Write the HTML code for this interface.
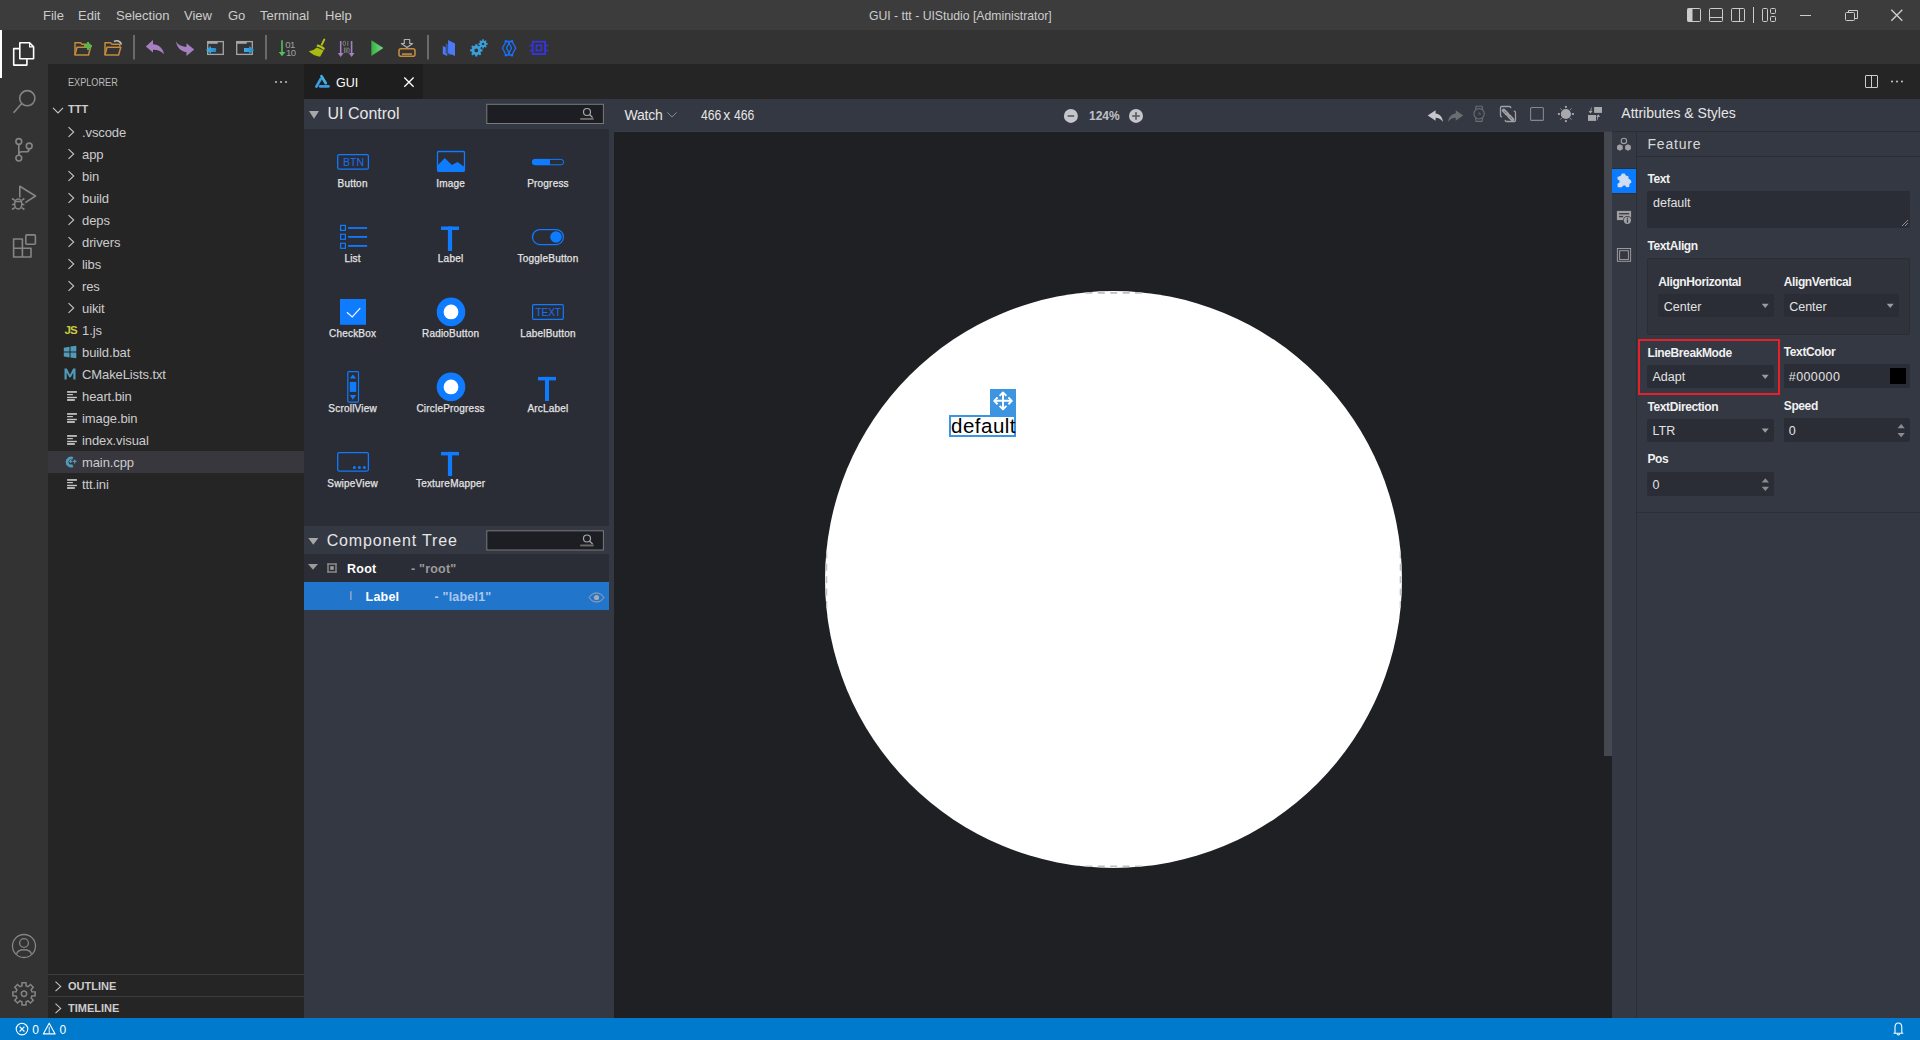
<!DOCTYPE html>
<html><head><meta charset="utf-8">
<style>
*{margin:0;padding:0;box-sizing:border-box}
html,body{width:1920px;height:1040px;overflow:hidden;background:#1e1e1e;font-family:"Liberation Sans",sans-serif;}
.a{position:absolute}
.t{position:absolute;white-space:nowrap;line-height:1}
svg{position:absolute;overflow:visible}
</style></head><body>
<!-- TITLE BAR -->
<div class="a" style="left:0;top:0;width:1920px;height:30px;background:#3c3c3c"></div>
<div id="menus" style="color:#cccccc;font-size:13px">
<span class="t" style="left:43px;top:9px">File</span>
<span class="t" style="left:78px;top:9px">Edit</span>
<span class="t" style="left:116px;top:9px">Selection</span>
<span class="t" style="left:184px;top:9px">View</span>
<span class="t" style="left:228px;top:9px">Go</span>
<span class="t" style="left:260px;top:9px">Terminal</span>
<span class="t" style="left:325px;top:9px">Help</span>
</div>
<span class="t" style="left:869px;top:9px;color:#cccccc;font-size:13px;transform:scaleX(0.94);transform-origin:0 0">GUI - ttt - UIStudio [Administrator]</span>

<!-- ACTIVITY BAR -->
<div class="a" style="left:0;top:30px;width:48px;height:988px;background:#333333"></div>
<!-- TOOLBAR -->
<div class="a" style="left:48px;top:30px;width:1872px;height:34px;background:#333333"></div>


<!-- title right icons -->
<svg style="left:0;top:0" width="1920" height="30">
 <g fill="none" stroke="#cccccc" stroke-width="1">
  <rect x="1687.5" y="8.5" width="13" height="13" rx="1"/>
  <rect x="1709.5" y="8.5" width="13" height="13" rx="1"/>
  <line x1="1709.5" y1="17.5" x2="1722.5" y2="17.5"/>
  <rect x="1731.5" y="8.5" width="13" height="13" rx="1"/>
  <line x1="1739.5" y1="8.5" x2="1739.5" y2="21.5"/>
  <line x1="1753.5" y1="7" x2="1753.5" y2="23"/>
  <rect x="1762.5" y="8.5" width="5" height="13" rx="1"/>
  <rect x="1770.5" y="8.5" width="5" height="5" rx="1"/>
  <rect x="1770.5" y="16.5" width="5" height="5" rx="1"/>
  <line x1="1800" y1="15.5" x2="1811" y2="15.5"/>
  <rect x="1845.5" y="12.5" width="9" height="8" rx="1"/>
  <path d="M1848.5 12.5 V10.5 H1857.5 V18.5 H1854.5"/>
  <path d="M1891.3 9.8 L1902.3 20.8 M1902.3 9.8 L1891.3 20.8" stroke-width="1.4"/>
 </g>
 <rect x="1687.5" y="8.5" width="5" height="13" fill="#cccccc"/>
</svg>

<!-- activity bar icons -->
<div class="a" style="left:0;top:30px;width:2px;height:48px;background:#ffffff"></div>
<svg style="left:0;top:30px" width="48" height="988">
 <g fill="none" stroke="#ffffff" stroke-width="1.6" stroke-linejoin="round">
  <path d="M19.8 18.6 H13.7 V35.1 H26.9 V28.8"/>
  <path d="M19.8 12.7 H29.6 L33.6 16.9 V28.8 H19.8 Z"/>
  <path d="M29.6 12.7 V16.9 H33.6" stroke-width="1.2"/>
 </g>
 <g fill="none" stroke="#858585" stroke-width="1.6" stroke-linejoin="round">
  <circle cx="27.3" cy="68.2" r="7.6"/>
  <line x1="21.5" y1="73.8" x2="13.6" y2="82.8"/>
  <circle cx="18.8" cy="111.5" r="2.9"/>
  <circle cx="18.8" cy="128.1" r="2.9"/>
  <circle cx="29.2" cy="116" r="2.9"/>
  <path d="M18.8 114.4 V125.2 M29.2 118.9 Q29 121.8 26.5 121.8 H21.8 Q18.8 121.8 18.8 125"/>
  <path d="M19.8 167.5 V156.3 L35.5 166 L25.3 172.6"/>
  <ellipse cx="18.2" cy="174" rx="3.6" ry="5"/>
  <path d="M14.6 171.5 H21.8 M12 168.5 L14.8 170.3 M24.4 168.5 L21.6 170.3 M12 174.5 H14.6 M21.8 174.5 H24.4 M12 179.5 L14.8 177.7 M24.4 179.5 L21.6 177.7"/>
  <path d="M13.6 209 H22.4 V218.2 H31 V227 H13.6 Z M13.6 218.2 H22.4 V227" />
  <rect x="25.8" y="204.9" width="9.6" height="9.3" rx="1"/>
  <g stroke-width="1.3"><circle cx="24" cy="916" r="11.5"/>
  <circle cx="24" cy="913" r="4.4"/>
  <path d="M16.4 924.3 C18 918.2 30 918.2 31.6 924.3"/></g>
 </g>
 <g transform="translate(24,963.8)" fill="none" stroke="#858585" stroke-width="1.5" stroke-linejoin="miter">
  <circle r="2.7"/>
  <path d="M7.92 -2.12 L11.13 -1.96 L11.13 1.96 L7.92 2.12 L7.10 4.10 L9.26 6.48 L6.48 9.26 L4.10 7.10 L2.12 7.92 L1.96 11.13 L-1.96 11.13 L-2.12 7.92 L-4.10 7.10 L-6.48 9.26 L-9.26 6.48 L-7.10 4.10 L-7.92 2.12 L-11.13 1.96 L-11.13 -1.96 L-7.92 -2.12 L-7.10 -4.10 L-9.26 -6.48 L-6.48 -9.26 L-4.10 -7.10 L-2.12 -7.92 L-1.96 -11.13 L1.96 -11.13 L2.12 -7.92 L4.10 -7.10 L6.48 -9.26 L9.26 -6.48 L7.10 -4.10 Z"/>
 </g>
</svg>


<!-- toolbar icons -->
<svg style="left:0;top:30px" width="600" height="34">
 <defs>
  <linearGradient id="gplay" x1="0" x2="1"><stop offset="0" stop-color="#36b246"/><stop offset="1" stop-color="#74d883"/></linearGradient>
  <linearGradient id="garr" x1="0" x2="1"><stop offset="0" stop-color="#41aee8"/><stop offset="1" stop-color="#2389c9"/></linearGradient>
 </defs>
 <!-- folder new -->
 <g fill="none" stroke="#c48a3e" stroke-width="1.5" stroke-linejoin="round">
  <path d="M75 25 V12.8 H80.5 L82 14.3 H89.8 V16.5"/>
  <path d="M75 25 L77 17.3 H90.5 L88.5 25 Z"/>
  <path d="M105 25 V12.8 H110.5 L112 14.3 H119.8 V16.5"/>
  <path d="M105 25 L107 17.3 H120.8 L118.6 25 Z"/>
 </g>
 <path d="M88 12 V20 M84 16 H92" stroke="#3ec24e" stroke-width="2"/>
 <path d="M114 11.5 C117 10 120.5 11 121.5 14.5" fill="none" stroke="#bdbdbd" stroke-width="1.6"/>
 <!-- separators -->
 <rect x="133" y="5" width="2" height="24.5" fill="#6a6a6a"/>
 <rect x="265" y="5" width="2" height="24.5" fill="#6a6a6a"/>
 <rect x="427" y="5" width="2" height="24.5" fill="#6a6a6a"/>
 <!-- undo/redo -->
 <path d="M145.8 16.5 L153 10 V14.2 C158.5 14.2 163 18 164.1 24.3 C161 21 157 19.6 153 19.8 V22.6 Z" fill="#a780c2"/>
 <path d="M194.2 19.4 L186.5 13.3 V16.8 C181.5 16.5 177.5 14.5 176 11.2 C176.5 17 181 21.5 186.5 22.2 V25.9 Z" fill="#a780c2"/>
 <!-- window arrows -->
 <g fill="none" stroke="#a5a5a5" stroke-width="1.3">
  <rect x="207.7" y="11.6" width="15.6" height="12.8"/>
  <rect x="236.7" y="11.6" width="15.6" height="12.8"/>
 </g>
 <rect x="207.7" y="11.6" width="10" height="2.2" fill="#a5a5a5"/>
 <rect x="236.7" y="11.6" width="10" height="2.2" fill="#a5a5a5"/>
 <path d="M206 20 L211 16 V17.9 H216.1 V22.1 H211 V24 Z" fill="url(#garr)"/>
 <path d="M254.2 20 L249.2 16 V17.9 H244 V22.1 H249.2 V24 Z" fill="url(#garr)"/>
 <!-- binary sort -->
 <path d="M282 10.2 V24" stroke="#50c25c" stroke-width="1.6"/>
 <path d="M278.7 22 L285.4 22 L282 26.2 Z" fill="#50c25c"/>
 <text x="285.2" y="17.9" font-family="Liberation Sans" font-size="9.5" fill="#a0a0a0" letter-spacing="-0.5">01</text>
 <text x="286" y="26.1" font-family="Liberation Sans" font-size="9.5" fill="#a0a0a0" letter-spacing="-0.5">10</text>
 <!-- broom -->
 <path d="M324.3 9.5 L321.8 14.6" stroke="#b4c414" stroke-width="1.9" stroke-linecap="round"/>
 <path d="M317.8 15.6 Q321.3 16.2 323.6 18.6" stroke="#b4c414" stroke-width="2.3" stroke-linecap="round" fill="none"/>
 <path d="M316.9 17.6 L323.6 20.4 L320.1 26.8 Q313.5 25.8 308.8 21.3 Q313.5 21 316.9 17.6 Z" fill="#aabb10"/>
 <!-- purple arrows -->
 <g stroke="#a77fc5" stroke-width="1.6">
  <path d="M340.7 11 V24"/><path d="M351.6 11 V24"/>
 </g>
 <path d="M337.8 23 H343.6 L340.7 27 Z M348.8 23 H354.5 L351.6 27 Z" fill="#a77fc5"/>
 <g fill="none" stroke="#8a8a8a" stroke-width="0.8">
  <rect x="343.2" y="11.2" width="2.2" height="4.4" rx="1"/>
  <path d="M347.8 11 V16 M344.4 17.5 V23 M346 17.5 V23"/>
  <rect x="347" y="18" width="2.2" height="4.4" rx="1"/>
 </g>
 <!-- play -->
 <path d="M371.4 10.3 L383.4 18 L371.4 25.9 Z" fill="url(#gplay)"/>
 <!-- deploy -->
 <rect x="399" y="18.8" width="16" height="7.4" rx="2" fill="none" stroke="#c48a3e" stroke-width="1.6"/>
 <rect x="402" y="23.3" width="10" height="1.6" fill="#c48a3e"/>
 <path d="M404.3 9.5 H409.7 V13.5 H412.6 L407 17.5 L401.4 13.5 H404.3 Z" fill="none" stroke="#b0b0b0" stroke-width="1.2" stroke-linejoin="round"/>
 <!-- building -->
 <path d="M442.8 16 L447.2 18 V26 L442.8 24 Z" fill="#4a7af5"/>
 <path d="M445.6 13.4 L451 15.6 V25.6 L445.6 23.4 Z" fill="#3b4f90"/>
 <path d="M448.1 10 L455 13.5 V26 L448.1 23 Z" fill="#4a7af5"/>
 <!-- gears -->
 <g fill="#3a9ed8">
  <circle cx="476.3" cy="20.4" r="4.8"/>
  <circle cx="483" cy="13.9" r="3.3"/>
 </g>
 <g stroke="#3a9ed8" stroke-width="2.2">
  <path d="M476.3 14.2 V26.6 M470.1 20.4 H482.5 M471.9 16 L480.7 24.8 M480.7 16 L471.9 24.8"/>
 </g>
 <g stroke="#3a9ed8" stroke-width="1.6">
  <path d="M483 9.3 V18.5 M478.4 13.9 H487.6 M479.8 10.7 L486.2 17.1 M486.2 10.7 L479.8 17.1"/>
 </g>
 <circle cx="476.3" cy="20.4" r="1.9" fill="#333333"/>
 <circle cx="483" cy="13.9" r="1.2" fill="#333333"/>
 <!-- diamond -->
 <g fill="none" stroke="#1a6ff5" stroke-width="1.4">
  <path d="M506 11.5 L502.5 18 L506 25 M512 11.5 L515.7 18 L512 25"/>
  <path d="M509 13 L506.5 18 L509 23 L511.5 18 Z"/>
  <path d="M506 11.5 H512 M506 25 H512"/>
 </g>
 <g fill="#1a6ff5"><circle cx="506" cy="11.3" r="1.3"/><circle cx="512" cy="11.3" r="1.3"/><circle cx="506" cy="25.2" r="1.3"/><circle cx="512" cy="25.2" r="1.3"/><circle cx="509" cy="12.5" r="1.2"/><circle cx="509" cy="23.5" r="1.2"/></g>
 <!-- chip -->
 <rect x="532.7" y="11.7" width="12.4" height="12.4" fill="none" stroke="#3535e0" stroke-width="1.8"/>
 <rect x="536.3" y="15.3" width="5.2" height="5.2" fill="none" stroke="#3535e0" stroke-width="1.6"/>
 <path d="M529.5 15.5 H532 M529.5 20.5 H532 M545.8 15.5 H548.3 M545.8 20.5 H548.3" stroke="#3535e0" stroke-width="1.6"/>
</svg>

<!-- SIDEBAR -->
<div class="a" style="left:48px;top:64px;width:256px;height:954px;background:#252526"></div>

<div class="a" style="left:48px;top:451px;width:256px;height:22px;background:#37373d"></div>
<span class="t" style="left:68px;top:76.99px;font-size:11px;color:#bbbbbb;transform:scaleX(0.83);transform-origin:0 0">EXPLORER</span>
<span class="t" style="left:68px;top:104.49px;font-size:11px;font-weight:bold;color:#cccccc">TTT</span>
<span class="t" style="left:82px;top:125.70px;font-size:13px;letter-spacing:-0.1px;color:#cccccc">.vscode</span>
<span class="t" style="left:82px;top:147.70px;font-size:13px;letter-spacing:-0.1px;color:#cccccc">app</span>
<span class="t" style="left:82px;top:169.70px;font-size:13px;letter-spacing:-0.1px;color:#cccccc">bin</span>
<span class="t" style="left:82px;top:191.70px;font-size:13px;letter-spacing:-0.1px;color:#cccccc">build</span>
<span class="t" style="left:82px;top:213.70px;font-size:13px;letter-spacing:-0.1px;color:#cccccc">deps</span>
<span class="t" style="left:82px;top:235.70px;font-size:13px;letter-spacing:-0.1px;color:#cccccc">drivers</span>
<span class="t" style="left:82px;top:257.70px;font-size:13px;letter-spacing:-0.1px;color:#cccccc">libs</span>
<span class="t" style="left:82px;top:279.70px;font-size:13px;letter-spacing:-0.1px;color:#cccccc">res</span>
<span class="t" style="left:82px;top:301.70px;font-size:13px;letter-spacing:-0.1px;color:#cccccc">uikit</span>
<span class="t" style="left:82px;top:323.70px;font-size:13px;letter-spacing:-0.1px;color:#cccccc">1.js</span>
<span class="t" style="left:82px;top:345.70px;font-size:13px;letter-spacing:-0.1px;color:#cccccc">build.bat</span>
<span class="t" style="left:82px;top:367.70px;font-size:13px;letter-spacing:-0.1px;color:#cccccc">CMakeLists.txt</span>
<span class="t" style="left:82px;top:389.70px;font-size:13px;letter-spacing:-0.1px;color:#cccccc">heart.bin</span>
<span class="t" style="left:82px;top:411.70px;font-size:13px;letter-spacing:-0.1px;color:#cccccc">image.bin</span>
<span class="t" style="left:82px;top:433.70px;font-size:13px;letter-spacing:-0.1px;color:#cccccc">index.visual</span>
<span class="t" style="left:82px;top:455.70px;font-size:13px;letter-spacing:-0.1px;color:#cccccc">main.cpp</span>
<span class="t" style="left:82px;top:477.70px;font-size:13px;letter-spacing:-0.1px;color:#cccccc">ttt.ini</span>
<svg style="left:48px;top:64px" width="256" height="954">
<g fill="#c5c5c5"><circle cx="228" cy="18" r="1"/><circle cx="233" cy="18" r="1"/><circle cx="238" cy="18" r="1"/></g>
<path d="M5 43.8 L10 49 L15 43.8" fill="none" stroke="#c5c5c5" stroke-width="1.1"/>
<path d="M20.5 63.2 L25.7 68 L20.5 72.8" fill="none" stroke="#c5c5c5" stroke-width="1.1"/>
<path d="M20.5 85.2 L25.7 90 L20.5 94.8" fill="none" stroke="#c5c5c5" stroke-width="1.1"/>
<path d="M20.5 107.2 L25.7 112 L20.5 116.8" fill="none" stroke="#c5c5c5" stroke-width="1.1"/>
<path d="M20.5 129.2 L25.7 134 L20.5 138.8" fill="none" stroke="#c5c5c5" stroke-width="1.1"/>
<path d="M20.5 151.2 L25.7 156 L20.5 160.8" fill="none" stroke="#c5c5c5" stroke-width="1.1"/>
<path d="M20.5 173.2 L25.7 178 L20.5 182.8" fill="none" stroke="#c5c5c5" stroke-width="1.1"/>
<path d="M20.5 195.2 L25.7 200 L20.5 204.8" fill="none" stroke="#c5c5c5" stroke-width="1.1"/>
<path d="M20.5 217.2 L25.7 222 L20.5 226.8" fill="none" stroke="#c5c5c5" stroke-width="1.1"/>
<path d="M20.5 239.2 L25.7 244 L20.5 248.8" fill="none" stroke="#c5c5c5" stroke-width="1.1"/>
<text x="16.4" y="270.3" font-family="Liberation Sans" font-weight="bold" font-size="11.5" fill="#cbcb41" letter-spacing="-0.9">JS</text>
<path d="M15.8 283.8 L21.5 282.8 V287.6 H15.8 Z M22.5 282.6 L28.3 281.7 V287.6 H22.5 Z M15.8 288.6 H21.5 V293.4 L15.8 292.5 Z M22.5 288.6 H28.3 V294.3 L22.5 293.5 Z" fill="#519aba"/>
<path d="M16.5 315.5 V304.5 H18.8 L22 310.8 L25.2 304.5 H27.5 V315.5 H25.3 V308.5 L22.8 313.2 H21.2 L18.7 308.5 V315.5 Z" fill="#519aba"/>
<g fill="#c5c5c5"><rect x="19.1" y="327.1" width="9.8" height="1.7"/><rect x="19.1" y="330.0" width="5.8" height="1.2"/><rect x="19.1" y="332.8" width="9.8" height="1.4"/><rect x="19.1" y="335.1" width="7.7" height="1.8"/></g>
<g fill="#c5c5c5"><rect x="19.1" y="349.1" width="9.8" height="1.7"/><rect x="19.1" y="352.0" width="5.8" height="1.2"/><rect x="19.1" y="354.8" width="9.8" height="1.4"/><rect x="19.1" y="357.1" width="7.7" height="1.8"/></g>
<g fill="#c5c5c5"><rect x="19.1" y="371.1" width="9.8" height="1.7"/><rect x="19.1" y="374.0" width="5.8" height="1.2"/><rect x="19.1" y="376.8" width="9.8" height="1.4"/><rect x="19.1" y="379.1" width="7.7" height="1.8"/></g>
<g fill="#c5c5c5"><rect x="19.1" y="415.1" width="9.8" height="1.7"/><rect x="19.1" y="418.0" width="5.8" height="1.2"/><rect x="19.1" y="420.8" width="9.8" height="1.4"/><rect x="19.1" y="423.1" width="7.7" height="1.8"/></g>
<path d="M24.8 394.4 A4 4 0 1 0 24.8 401.6" fill="none" stroke="#519aba" stroke-width="2.9"/><path d="M21.1 397.4 H24.1 M22.6 395.9 V398.9 M24.6 397.4 H28.6 M26.6 395.4 V399.4" stroke="#519aba" stroke-width="1.2"/>
<rect x="0" y="910" width="256" height="1" fill="#3c3c3c"/>
<rect x="0" y="932" width="256" height="1" fill="#3c3c3c"/>
<path d="M7.5 917.6 L12.7 922.4 L7.5 927.2" fill="none" stroke="#c5c5c5" stroke-width="1.1"/>
<path d="M7.5 939.6 L12.7 944.4 L7.5 949.2" fill="none" stroke="#c5c5c5" stroke-width="1.1"/>
</svg>
<span class="t" style="left:68px;top:981.19px;font-size:11px;font-weight:bold;color:#cccccc">OUTLINE</span>
<span class="t" style="left:68px;top:1003.29px;font-size:11px;font-weight:bold;color:#cccccc">TIMELINE</span>
<!-- TAB BAR -->
<div class="a" style="left:304px;top:64px;width:1616px;height:35px;background:#252526"></div>
<div class="a" style="left:304px;top:64px;width:119px;height:35px;background:#1e1e1e"></div>

<!-- GUI: left panel -->
<div class="a" style="left:304px;top:99px;width:310px;height:919px;background:#343842"></div>
<div class="a" style="left:304px;top:129px;width:305px;height:397px;background:#2a2d35"></div>
<div class="a" style="left:304px;top:554px;width:305px;height:28px;background:#2a2d35"></div>
<div class="a" style="left:304px;top:582px;width:305px;height:28px;background:#2176cc"></div>

<svg style="left:304px;top:64px" width="1616" height="35">
 <defs><linearGradient id="gtab" x1="0" y1="0" x2="1" y2="1"><stop offset="0" stop-color="#3ab4e0"/><stop offset="1" stop-color="#2a8ae0"/></linearGradient></defs>
 <g stroke-width="2.7" stroke-linecap="round" fill="none">
  <path d="M12.4 22.6 L16.6 15.2" stroke="#3a9ee0"/>
  <path d="M17.5 12.2 L21.8 19.2" stroke="#40b2e0"/>
  <path d="M16.1 22.3 H24.5" stroke="#3a9ae0"/>
 </g>
 <path d="M100.3 13.5 L109.6 22.8 M109.6 13.5 L100.3 22.8" stroke="#ffffff" stroke-width="1.3"/>
 <rect x="1561.5" y="11.5" width="12" height="12" rx="0.5" fill="none" stroke="#cccccc" stroke-width="1"/>
 <path d="M1567.5 11.5 V23.5" stroke="#cccccc" stroke-width="1"/>
 <g fill="#cccccc"><circle cx="1588" cy="17.6" r="1"/><circle cx="1593" cy="17.6" r="1"/><circle cx="1598" cy="17.6" r="1"/></g>
</svg>
<span class="t" style="left:336px;top:77.12px;font-size:12.5px;color:#ffffff">GUI</span>
<!-- LEFT PANEL CONTENT -->
<span class="t" style="left:327.5px;top:106.26px;font-size:16px;color:#e6e6e6">UI Control</span>
<span class="t" style="left:326.7px;top:532.56px;font-size:16px;color:#e6e6e6;letter-spacing:0.85px">Component Tree</span>
<svg style="left:304px;top:99px" width="310" height="919">
<path d="M5 12 H15 L10 19.8 Z" fill="#a8a8a8"/>
<path d="M4.3 439 H14.3 L9.3 445.8 Z" fill="#a8a8a8"/>
<rect x="182.8" y="5.3" width="116.6" height="19.2" fill="#1c1e23" stroke="#7a7a7a" stroke-width="1"/>
<circle cx="283" cy="13" r="3.5" fill="none" stroke="#a8a8a8" stroke-width="1.2"/><path d="M285.5 15.5 L288.6 18.5" stroke="#a8a8a8" stroke-width="1.2"/><rect x="276.2" y="19" width="13.5" height="1.9" fill="#6b6b6b"/>
<rect x="182.8" y="431.8" width="116.6" height="19.2" fill="#1c1e23" stroke="#7a7a7a" stroke-width="1"/>
<circle cx="283" cy="439.5" r="3.5" fill="none" stroke="#a8a8a8" stroke-width="1.2"/><path d="M285.5 442.0 L288.6 445.0" stroke="#a8a8a8" stroke-width="1.2"/><rect x="276.2" y="445.5" width="13.5" height="1.9" fill="#6b6b6b"/>
<rect x="33.7" y="55.6" width="30.7" height="14.6" rx="1.5" fill="none" stroke="#0f7bff" stroke-width="1.3"/>
<text x="39" y="66.6" font-family="Liberation Sans" font-size="10.5" fill="#1a6ff5">BTN</text>
<rect x="133.5" y="52.5" width="27" height="19.8" rx="1" fill="none" stroke="#0f7bff" stroke-width="1.3"/>
<path d="M133.5 66.5 L140.75 59.099999999999994 L147.89999999999998 66 L153.5 62.900000000000006 L160.5 68 V72.30000000000001 H133.5 Z" fill="#0f7bff"/>
<rect x="228.4" y="60.4" width="31.2" height="5.4" rx="2.7" fill="none" stroke="#0f7bff" stroke-width="1"/>
<path d="M231 60 H246 V66 H231 A3 3 0 0 1 231 60 Z" fill="#0f7bff"/>
<rect x="36.6" y="126.4" width="4.8" height="5" fill="none" stroke="#0f7bff" stroke-width="1.2"/>
<rect x="44.1" y="128.1" width="19" height="1.8" fill="#0f7bff"/>
<rect x="36.6" y="135.3" width="4.8" height="5" fill="none" stroke="#0f7bff" stroke-width="1.2"/>
<rect x="44.1" y="137.0" width="19" height="1.8" fill="#0f7bff"/>
<rect x="36.6" y="144.3" width="4.8" height="5" fill="none" stroke="#0f7bff" stroke-width="1.2"/>
<rect x="44.1" y="146.0" width="19" height="1.8" fill="#0f7bff"/>
<rect x="137" y="127.5" width="18" height="3.5" fill="#0f7bff"/>
<rect x="143.9" y="127.5" width="4.2000000000000455" height="24.5" fill="#0f7bff"/>
<rect x="234" y="277.9" width="18" height="3.5" fill="#0f7bff"/>
<rect x="241" y="277.9" width="4" height="24.100000000000023" fill="#0f7bff"/>
<rect x="137" y="352.9" width="18" height="3.5" fill="#0f7bff"/>
<rect x="143.9" y="352.9" width="4.2000000000000455" height="24.100000000000023" fill="#0f7bff"/>
<rect x="228.5" y="130.6" width="31" height="15" rx="7.5" fill="none" stroke="#0f7bff" stroke-width="1.3"/>
<circle cx="252" cy="138" r="5.8" fill="#0f7bff"/>
<rect x="36" y="200" width="26" height="25.8" fill="#0f7bff"/>
<path d="M42.89999999999998 213.25 L48.25 217.89999999999998 L56.25 209.10000000000002" fill="none" stroke="#ffffff" stroke-width="1.1"/>
<circle cx="147" cy="212.9" r="14.3" fill="#0f7bff"/><circle cx="147" cy="212.9" r="7.4" fill="#ffffff"/>
<circle cx="147" cy="287.9" r="14.3" fill="#0f7bff"/><circle cx="147" cy="287.9" r="7.4" fill="#ffffff"/>
<rect x="228.6" y="205.6" width="30.7" height="14.7" rx="1" fill="none" stroke="#0f7bff" stroke-width="1.2"/>
<text x="231.6" y="216.6" font-family="Liberation Sans" font-size="10.3" fill="#1a6ff5" letter-spacing="-0.3">TEXT</text>
<rect x="43.8" y="272.6" width="10.7" height="30.5" rx="1" fill="none" stroke="#0f7bff" stroke-width="1.2"/>
<path d="M48.89999999999998 275.4 L52.25 279.5 H45.75 Z M45.75 296 H52.25 L48.89999999999998 300.75 Z" fill="#0f7bff"/>
<rect x="45.75" y="282.9" width="6.5" height="10" fill="#0f7bff"/>
<rect x="33.7" y="353.7" width="30.7" height="18.4" rx="1.5" fill="none" stroke="#0f7bff" stroke-width="1.3"/>
<circle cx="50.4" cy="368.4" r="1.5" fill="#0f7bff"/>
<circle cx="55.4" cy="368.4" r="1.5" fill="#0f7bff"/>
<circle cx="60.4" cy="368.4" r="1.5" fill="#0f7bff"/>
<path d="M4 465 H14 L9 470.8 Z" fill="#9a9a9a"/>
<rect x="24" y="465" width="8" height="8" fill="none" stroke="#8a8a8a" stroke-width="1"/><rect x="26.2" y="467.2" width="3.6" height="3.6" fill="#9a9a9a"/>
<path d="M23.2 465 H32.8 M23.2 473 H32.8 M24 464.2 V473.8 M32 464.2 V473.8" stroke="#8a8a8a" stroke-width="1"/>
<rect x="46.3" y="492.2" width="1.2" height="8.8" fill="#b8b0cc"/>
<path d="M285.2 498.5 C288.5 492.5 296.5 492.5 299.8 498.5 C296.5 504.5 288.5 504.5 285.2 498.5 Z" fill="none" stroke="#a8a8b0" stroke-width="1"/><circle cx="292.5" cy="498.5" r="2.6" fill="#a8a8b0"/>
</svg>
<span class="t" style="left:302.6px;width:100px;text-align:center;top:179.24px;font-size:10px;color:#e4e4e4;letter-spacing:0.2px;-webkit-text-stroke:0.25px #e4e4e4">Button</span>
<span class="t" style="left:400.6px;width:100px;text-align:center;top:179.24px;font-size:10px;color:#e4e4e4;letter-spacing:0.2px;-webkit-text-stroke:0.25px #e4e4e4">Image</span>
<span class="t" style="left:498px;width:100px;text-align:center;top:179.24px;font-size:10px;color:#e4e4e4;letter-spacing:0.2px;-webkit-text-stroke:0.25px #e4e4e4">Progress</span>
<span class="t" style="left:302.6px;width:100px;text-align:center;top:254.23px;font-size:10px;color:#e4e4e4;letter-spacing:0.2px;-webkit-text-stroke:0.25px #e4e4e4">List</span>
<span class="t" style="left:400.6px;width:100px;text-align:center;top:254.23px;font-size:10px;color:#e4e4e4;letter-spacing:0.2px;-webkit-text-stroke:0.25px #e4e4e4">Label</span>
<span class="t" style="left:498px;width:100px;text-align:center;top:254.23px;font-size:10px;color:#e4e4e4;letter-spacing:0.2px;-webkit-text-stroke:0.25px #e4e4e4">ToggleButton</span>
<span class="t" style="left:302.6px;width:100px;text-align:center;top:329.14px;font-size:10px;color:#e4e4e4;letter-spacing:0.2px;-webkit-text-stroke:0.25px #e4e4e4">CheckBox</span>
<span class="t" style="left:400.6px;width:100px;text-align:center;top:329.14px;font-size:10px;color:#e4e4e4;letter-spacing:0.2px;-webkit-text-stroke:0.25px #e4e4e4">RadioButton</span>
<span class="t" style="left:498px;width:100px;text-align:center;top:329.14px;font-size:10px;color:#e4e4e4;letter-spacing:0.2px;-webkit-text-stroke:0.25px #e4e4e4">LabelButton</span>
<span class="t" style="left:302.6px;width:100px;text-align:center;top:404.14px;font-size:10px;color:#e4e4e4;letter-spacing:0.2px;-webkit-text-stroke:0.25px #e4e4e4">ScrollView</span>
<span class="t" style="left:400.6px;width:100px;text-align:center;top:404.14px;font-size:10px;color:#e4e4e4;letter-spacing:0.2px;-webkit-text-stroke:0.25px #e4e4e4">CircleProgress</span>
<span class="t" style="left:498px;width:100px;text-align:center;top:404.14px;font-size:10px;color:#e4e4e4;letter-spacing:0.2px;-webkit-text-stroke:0.25px #e4e4e4">ArcLabel</span>
<span class="t" style="left:302.6px;width:100px;text-align:center;top:479.14px;font-size:10px;color:#e4e4e4;letter-spacing:0.2px;-webkit-text-stroke:0.25px #e4e4e4">SwipeView</span>
<span class="t" style="left:400.6px;width:100px;text-align:center;top:479.14px;font-size:10px;color:#e4e4e4;letter-spacing:0.2px;-webkit-text-stroke:0.25px #e4e4e4">TextureMapper</span>
<span class="t" style="left:347.1px;top:563.22px;font-size:12.5px;font-weight:bold;color:#ffffff;letter-spacing:0.2px">Root</span>
<span class="t" style="left:411px;top:562.92px;font-size:12.5px;font-weight:bold;color:#9a9a9a;letter-spacing:0.2px">- "root"</span>
<span class="t" style="left:365.6px;top:591.22px;font-size:12.5px;font-weight:bold;color:#ffffff;letter-spacing:0.2px">Label</span>
<span class="t" style="left:434.5px;top:591.22px;font-size:12.5px;font-weight:bold;color:#a9c9ec;letter-spacing:0.2px">- "label1"</span>
<!-- canvas toolbar -->
<div class="a" style="left:614px;top:99px;width:998px;height:32px;background:#343842"></div>
<div class="a" style="left:614px;top:131px;width:998px;height:1px;background:#393d46"></div>
<div class="a" style="left:614px;top:132px;width:998px;height:886px;background:#1e2024"></div>
<div class="a" style="left:1604px;top:132px;width:8px;height:624px;background:#454850"></div>

<span class="t" style="left:624.4px;top:107.95px;font-size:14px;color:#e6e6e6;letter-spacing:-0.2px">Watch</span>
<span class="t" style="left:701px;top:107.55px;font-size:14px;color:#e6e6e6;transform:scaleX(0.87);transform-origin:0 0">466</span><span class="t" style="left:723.2px;top:107.55px;font-size:14px;color:#e6e6e6">x</span><span class="t" style="left:734px;top:107.55px;font-size:14px;color:#e6e6e6;transform:scaleX(0.87);transform-origin:0 0">466</span>
<span class="t" style="left:1089px;top:109.64px;font-size:12px;font-weight:bold;color:#c0c1c5">124%</span>
<svg style="left:614px;top:99px" width="998" height="32">
<path d="M53.5 13.5 L58.0 18.0 L62.5 13.5" fill="none" stroke="#8a8d93" stroke-width="1"/>
<circle cx="456.9" cy="16.9" r="7" fill="#c5c6ca"/><rect x="453.59999999999997" y="16.099999999999998" width="6.6" height="1.8" fill="#60646c"/>
<circle cx="522" cy="16.9" r="7" fill="#c5c6ca"/><rect x="518.2" y="16.099999999999998" width="7.6" height="1.8" fill="#60646c"/><rect x="521.1" y="13.099999999999998" width="1.8" height="7.6" fill="#60646c"/>
<path d="M813.7 16.400000000000006 L821.5999999999999 11.200000000000003 V14.599999999999994 C825.5 14.799999999999997 828.5 18 828.9000000000001 22.900000000000006 C827 20 824.5 18.799999999999997 821.5999999999999 18.700000000000003 V21.799999999999997 Z" fill="#c8c8cc"/>
<path d="M849.2 16.400000000000006 L841.7 11.200000000000003 V14.599999999999994 C837.8 14.799999999999997 834.5999999999999 18 834.0999999999999 22.900000000000006 C836 20 838.8 18.799999999999997 841.7 18.700000000000003 V21.799999999999997 Z" fill="#6a6d72"/>
<circle cx="865.1" cy="14.8" r="5.2" fill="none" stroke="#6a6d72" stroke-width="1.1"/><path d="M861.5 10.600000000000001 L862.1 7.300000000000001 H868.1 L868.7 10.600000000000001 M861.5 19.0 L862.1 22.4 H868.1 L868.7 19.0" fill="none" stroke="#6a6d72" stroke-width="1.1"/><path d="M865.1 13.3 V15.100000000000001 H867.1" fill="none" stroke="#6a6d72" stroke-width="0.9"/>
<path d="M896.8 8.7 Q896.8 7.5 895.5 7.5 H887.7 Q886.5 7.5 886.5 8.7 V16.5 Q886.5 17.8 887.7 17.8" fill="none" stroke="#a0a0a4" stroke-width="1.3" stroke-linecap="round"/><path d="M891.2 21.3 Q891.2 22.5 892.5 22.5 H900.3 Q901.5 22.5 901.5 21.3 V13.5 Q901.5 12.2 900.3 12.2" fill="none" stroke="#a0a0a4" stroke-width="1.3" stroke-linecap="round"/>
<path d="M889.7 11.5 L893.3 15.1 M895.1 17.1 L898.5 20.5" stroke="#a0a0a4" stroke-width="3.8" stroke-linecap="round"/><path d="M892.7 16.1 L895.3 16.5" stroke="#a0a0a4" stroke-width="1.2"/><path d="M890.5 12.3 L892.5 14.3 M895.9 17.9 L897.7 19.7" stroke="#5a5d63" stroke-width="0.8"/>
<rect x="916.6" y="8.5" width="12.8" height="12.9" rx="1" fill="none" stroke="#85878c" stroke-width="1.1"/>
<circle cx="951.9" cy="15" r="5.1" fill="#a8a9ad"/>
<g fill="#a0a1a5"><rect x="950.9" y="6.9" width="2" height="2"/><rect x="950.9" y="21.1" width="2" height="2"/><rect x="943.9" y="14" width="2" height="2"/><rect x="957.9" y="14" width="2" height="2"/></g>
<path d="M946.4 9.5 L947.6999999999999 10.8 M957.4 9.5 L956.1 10.8 M946.4 20.5 L947.6999999999999 19.2 M957.4 20.5 L956.1 19.2" stroke="#a0a1a5" stroke-width="1"/>
<rect x="980.1" y="8" width="7.9" height="5.9" fill="#a8a9ad"/>
<rect x="974" y="16" width="8" height="5.9" fill="#a8a9ad"/>
<path d="M978 8 C976.5 9.5 976.3 11 976.5 12 L974.5 12.2 L976.5 14.5 L978.6 12 L977.3 12 C977.2 10.6 977.5 9.3 978 8 Z" fill="#a8a9ad"/>
<path d="M982.5 22 C984.0 20.5 984.3 19 984.1 18 L986.1 17.8 L984.3 15.3 L982.1 17.9 L983.3 18 C983.4 19.4 983.1 20.7 982.5 22 Z" fill="#a8a9ad"/>
</svg>
<!-- right panel -->
<div class="a" style="left:1612px;top:99px;width:308px;height:919px;background:#343842"></div>

<svg style="left:614px;top:131px" width="998" height="887">
 <defs><clipPath id="cc"><circle cx="499.5" cy="448.5" r="288.5"/></clipPath></defs>
 <circle cx="499.5" cy="448.5" r="288.5" fill="#ffffff"/>
 <g clip-path="url(#cc)" stroke="#c0c0c0" stroke-width="1.8" stroke-dasharray="7 5.4" fill="none">
  <line x1="211" y1="161.9" x2="788" y2="161.9"/>
  <line x1="211" y1="735.4" x2="788" y2="735.4"/>
  <line x1="212.4" y1="160" x2="212.4" y2="737"/>
  <line x1="786.6" y1="160" x2="786.6" y2="737"/>
 </g>
</svg>
<div class="a" style="left:949px;top:415px;width:67px;height:22px;border:2px solid #3d94e0"></div>
<div class="a" style="left:990px;top:389px;width:26px;height:26px;background:#3d94e0"></div>
<svg style="left:990px;top:389px" width="26" height="26">
 <g fill="none" stroke="#ffffff" stroke-width="1.9" stroke-linecap="butt" stroke-linejoin="round">
  <path d="M9.6 6.8 L13 3.4 L16.4 6.8 M9.6 16.9 L13 20.3 L16.4 16.9 M7.6 8.45 L4.2 11.85 L7.6 15.25 M18.4 8.45 L21.8 11.85 L18.4 15.25"/>
 </g>
 <path d="M13 4 V19.8 M4.8 11.85 H21.2" stroke="#ffffff" stroke-width="2"/>
</svg>
<span class="t" style="left:951px;top:416.25px;font-size:20.5px;color:#000000;letter-spacing:0.5px">default</span>
<!-- RIGHT PANEL CONTENT -->
<div class="a" style="left:1612px;top:131px;width:308px;height:1px;background:#2b2e35"></div>
<div class="a" style="left:1636px;top:131px;width:1px;height:887px;background:#2b2e35"></div>
<div class="a" style="left:1637px;top:156px;width:283px;height:1px;background:#2b2e35"></div>
<div class="a" style="left:1637px;top:512px;width:283px;height:1px;background:#2b2e35"></div>
<div class="a" style="left:1612px;top:168px;width:24px;height:1px;background:#2b2e35"></div>
<div class="a" style="left:1612px;top:169px;width:24px;height:24px;background:#0a7bff"></div>
<div class="a" style="left:1612px;top:193px;width:24px;height:1px;background:#2b2e35"></div>
<span class="t" style="left:1621.3px;top:105.95px;font-size:14px;color:#e6e6e6">Attributes &amp; Styles</span>
<span class="t" style="left:1647.5px;top:137.15px;font-size:14px;color:#d8d8d8;letter-spacing:0.8px">Feature</span>
<div class="a" style="left:1647px;top:191.3px;width:262.7px;height:37.0px;background:#2a2d35;border-radius:2px;"></div>
<div class="a" style="left:1647px;top:258.3px;width:263.0px;height:76.39999999999998px;background:#30333b;border-radius:2px;border:1px solid #2a2d34;"></div>
<div class="a" style="left:1658.3px;top:294.2px;width:115.5px;height:23.30000000000001px;background:#2a2d35;border-radius:2px;"></div>
<div class="a" style="left:1783.8px;top:294.2px;width:114.90000000000009px;height:23.30000000000001px;background:#2a2d35;border-radius:2px;"></div>
<div class="a" style="left:1647px;top:365.3px;width:126.8px;height:23.0px;background:#2a2d35;border-radius:2px;"></div>
<div class="a" style="left:1783.8px;top:364.2px;width:126.20000000000005px;height:24.100000000000023px;background:#2a2d35;border-radius:2px;"></div>
<div class="a" style="left:1647px;top:419.2px;width:126.8px;height:23.30000000000001px;background:#2a2d35;border-radius:2px;"></div>
<div class="a" style="left:1783.8px;top:418.3px;width:126.20000000000005px;height:24.19999999999999px;background:#2a2d35;border-radius:2px;"></div>
<div class="a" style="left:1647px;top:472.2px;width:126.8px;height:24.100000000000023px;background:#2a2d35;border-radius:2px;"></div>
<div class="a" style="left:1890px;top:368px;width:16px;height:15.7px;background:#000000"></div>
<div class="a" style="left:1638.3px;top:339.2px;width:141.4px;height:55.8px;border:2px solid #e8202a"></div>
<span class="t" style="left:1647.5px;top:172.64px;font-size:12px;font-weight:bold;color:#f0f0f0;letter-spacing:-0.4px">Text</span>
<span class="t" style="left:1647.5px;top:239.94px;font-size:12px;font-weight:bold;color:#f0f0f0;letter-spacing:-0.4px">TextAlign</span>
<span class="t" style="left:1658.3px;top:275.84px;font-size:12px;font-weight:bold;color:#f0f0f0;letter-spacing:-0.4px">AlignHorizontal</span>
<span class="t" style="left:1783.8px;top:275.84px;font-size:12px;font-weight:bold;color:#f0f0f0;letter-spacing:-0.4px">AlignVertical</span>
<span class="t" style="left:1647.5px;top:347.14px;font-size:12px;font-weight:bold;color:#f0f0f0;letter-spacing:-0.4px">LineBreakMode</span>
<span class="t" style="left:1783.8px;top:345.94px;font-size:12px;font-weight:bold;color:#f0f0f0;letter-spacing:-0.4px">TextColor</span>
<span class="t" style="left:1647.5px;top:400.84px;font-size:12px;font-weight:bold;color:#f0f0f0;letter-spacing:-0.4px">TextDirection</span>
<span class="t" style="left:1783.8px;top:399.94px;font-size:12px;font-weight:bold;color:#f0f0f0;letter-spacing:-0.4px">Speed</span>
<span class="t" style="left:1647.5px;top:453.44px;font-size:12px;font-weight:bold;color:#f0f0f0;letter-spacing:-0.4px">Pos</span>
<span class="t" style="left:1653px;top:197.14px;font-size:12.5px;color:#e2e2e2">default</span>
<span class="t" style="left:1663.8px;top:300.64px;font-size:12.5px;color:#e2e2e2">Center</span>
<span class="t" style="left:1789.2px;top:300.64px;font-size:12.5px;color:#e2e2e2">Center</span>
<span class="t" style="left:1652.5px;top:370.94px;font-size:12.5px;color:#e2e2e2">Adapt</span>
<span class="t" style="left:1788.8px;top:370.94px;font-size:12.5px;color:#e2e2e2;letter-spacing:0.4px">#000000</span>
<span class="t" style="left:1652.5px;top:425.14px;font-size:12.5px;color:#e2e2e2">LTR</span>
<span class="t" style="left:1788.8px;top:425.14px;font-size:12.5px;color:#e2e2e2">0</span>
<span class="t" style="left:1652.5px;top:479.34px;font-size:12.5px;color:#e2e2e2">0</span>
<svg style="left:1612px;top:99px" width="308" height="420">
<path d="M149.7 204.8 H156.7 L153.2 209.0 Z" fill="#9a9ca0"/>
<path d="M274.7 204.8 H281.7 L278.2 209.0 Z" fill="#9a9ca0"/>
<path d="M149.7 275.7 H156.7 L153.2 279.9 Z" fill="#9a9ca0"/>
<path d="M149.7 329.6 H156.7 L153.2 333.8 Z" fill="#9a9ca0"/>
<path d="M285.5 329.2 H292.8 L289.15 325 Z M285.5 334 H292.8 L289.15 338.2 Z" fill="#8a8c90"/>
<path d="M149.7 383.5 H157.0 L153.35 379.3 Z M149.7 387.7 H157.0 L153.35 391.9 Z" fill="#8a8c90"/>
<path d="M290 127 L296 121 M293 127 L296 124" stroke="#9a9ca0" stroke-width="0.9"/>
<circle cx="11.9" cy="41.9" r="2.7" fill="none" stroke="#a0a0a4" stroke-width="1.1"/>
<polygon points="10.76,50.15 7.90,51.80 5.04,50.15 5.04,46.85 7.90,45.20 10.76,46.85" fill="#a0a0a4"/>
<polygon points="18.86,50.15 16.00,51.80 13.14,50.15 13.14,46.85 16.00,45.20 18.86,46.85" fill="#a0a0a4"/>
<path d="M10.2 75.2 L12.5 75.2 L13.5 77.2 L15.8 77.5 L16 80 L18.3 81.6 L18.8 83.2 L16.9 84.5 L16.7 87.4 L14.8 87.7 L13.5 86 L11.5 85.8 L9.2 87.7 L6.3 87.7 L6.1 85.3 L8.2 83.5 L8 81.2 L6.1 80.1 L6.1 78.3 L8.8 77.5 Z" fill="#d0dcf0" stroke="#d0dcf0" stroke-width="1.2" stroke-linejoin="round"/>
<rect x="4.9" y="111.9" width="14.2" height="9.2" fill="#a0a0a4"/>
<rect x="7.1000000000000005" y="114.10000000000001" width="10" height="1.3" fill="#343842"/><rect x="7.1000000000000005" y="116.9" width="4" height="1.3" fill="#343842"/>
<circle cx="15.4" cy="121.3" r="4.3" fill="#343842"/><circle cx="15.4" cy="121.3" r="3.6" fill="#a0a0a4"/><rect x="14.8" y="120.5" width="1.3" height="3.2" fill="#343842"/><circle cx="15.4" cy="119.3" r="0.7" fill="#343842"/>
<rect x="5.4" y="149.5" width="13.2" height="12.8" fill="none" stroke="#9a9a9e" stroke-width="1"/>
<rect x="7.6" y="151.7" width="8.8" height="8.8" fill="none" stroke="#9a9a9e" stroke-width="1"/>
</svg>
<!-- circle -->


<!-- STATUS BAR -->
<div class="a" style="left:0;top:1018px;width:1920px;height:22px;background:#007acc"></div>
<svg style="left:0;top:1018px" width="1920" height="22">
 <g fill="none" stroke="#ffffff" stroke-width="1.1">
  <circle cx="22" cy="11.1" r="5.8"/>
  <path d="M19.6 8.7 L24.4 13.5 M24.4 8.7 L19.6 13.5"/>
  <path d="M49.2 5.2 L55.1 15.9 H43.3 Z" stroke-linejoin="round"/>
  <path d="M49.2 8.8 V15" stroke-width="0.9"/>
  <path d="M1893.5 15.3 H1903.3 M1895 15.3 V9.5 Q1895 5 1898.4 5 Q1901.8 5 1901.8 9.5 V15.3 M1897 16.2 Q1898.4 17.8 1899.8 16.2"/>
 </g>
 
</svg>
<span class="t" style="left:32.3px;top:1024.04px;font-size:12px;color:#ffffff">0</span>
<span class="t" style="left:59.5px;top:1024.04px;font-size:12px;color:#ffffff">0</span>
</body></html>
